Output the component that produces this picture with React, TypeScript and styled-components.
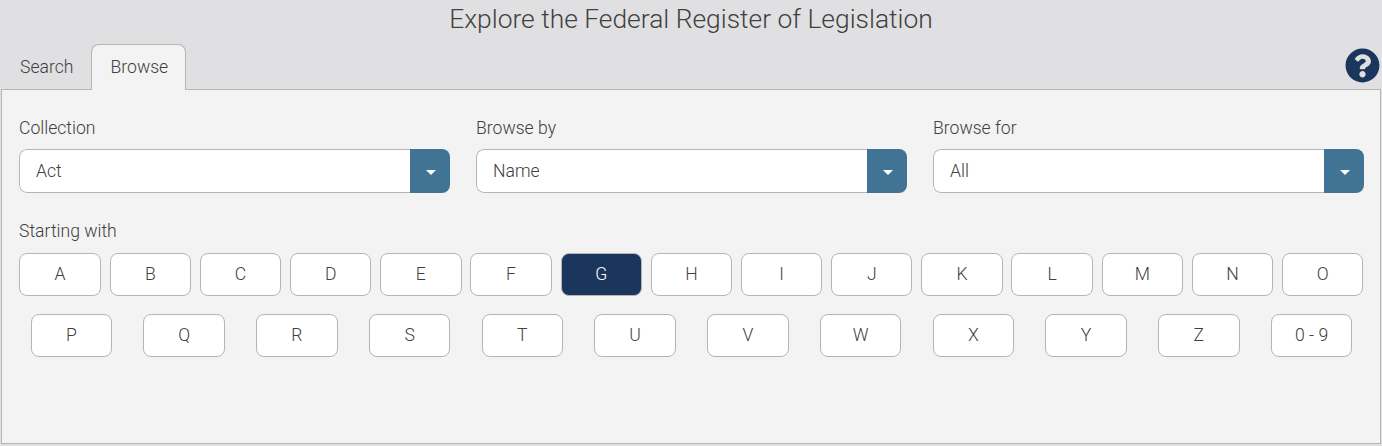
import { createGlobalStyle, styled } from 'styled-components'
import { FaQuestionCircle } from 'react-icons/fa'

const GlobalStyle = createGlobalStyle`
  html, body {
    margin: 0;
    padding: 0;
    background: #e0e0e2;
  }
  * {
    box-sizing: border-box;
  }
  body {
    font-family: Roboto, "Liberation Sans", sans-serif;
    font-weight: 300;
    color: #404040;
  }
`

const Page = styled.div`
  width: 1382px;
  height: 446px;
  display: flex;
  flex-direction: column;
  background: #e0e0e2;
`

const Title = styled.h1`
  margin: 0;
  height: 44px;
  padding-top: 3px;
  font-size: 26.4px;
  line-height: 32px;
  font-weight: 300;
  text-align: center;
  color: #404040;
`

const TabBar = styled.div`
  height: 46px;
  margin-bottom: -1px;
  display: flex;
  align-items: flex-end;
  position: relative;
  z-index: 1;
`

const Tab = styled.div<{ $active?: boolean }>`
  height: 46px;
  padding: 0 17px 0 ${(p) => (p.$active ? '18px' : '19px')};
  line-height: 45px;
  font-size: 17.6px;
  border: 1px solid ${(p) => (p.$active ? '#b5b5b5' : 'transparent')};
  border-bottom: 0;
  border-radius: 8px 8px 0 0;
  background: ${(p) => (p.$active ? '#f3f3f3' : 'transparent')};
`

const HelpButton = styled.div`
  margin: 0 2px 7px auto;
  height: 35px;
  font-size: 35px;
  line-height: 35px;
  color: #1b365d;
  svg {
    display: block;
  }
`

const Panel = styled.div`
  height: 355px;
  margin: 0 1px;
  padding: 26px 13px 0;
  background: #f3f3f3;
  border: 1px solid #b5b5b5;
`

const Filters = styled.div`
  display: grid;
  grid-template-columns: repeat(3, 431px);
  justify-content: space-between;
  padding: 0 3px 0 4px;
`

const Label = styled.label`
  display: block;
  font-size: 17.6px;
  line-height: 25px;
  margin-bottom: 8px;
`

const SelectBox = styled.div`
  height: 44px;
  display: flex;
  border-radius: 8px;
  overflow: hidden;
`

const SelectValue = styled.div`
  flex: 1;
  padding-left: 16px;
  font-size: 17.6px;
  line-height: 43px;
  background: #fff;
  border: 1px solid #b5b5b5;
  border-right: 0;
  border-radius: 8px 0 0 8px;
`

const SelectArrow = styled.div`
  width: 40px;
  padding: 2px 0 0 2px;
  display: flex;
  align-items: center;
  justify-content: center;
  background: #417394;
  &::after {
    content: '';
    border-style: solid;
    border-width: 5px 5px 0;
    border-color: #fff transparent transparent;
  }
`

const StartingLabel = styled(Label)`
  margin: 26px 0 9px;
  padding: 0 4px;
`

const LetterRow = styled.div`
  display: flex;
  justify-content: space-around;
  margin: 0 -1px 18px 0;
`

const LetterButton = styled.button<{ $active?: boolean }>`
  width: 81.4px;
  height: 43px;
  padding: 0 0 2px;
  font-family: inherit;
  font-weight: 300;
  font-size: 17.6px;
  border: 1px solid #b5b5b5;
  border-radius: 8px;
  background: ${(p) => (p.$active ? '#1b365d' : '#fff')};
  color: ${(p) => (p.$active ? '#fff' : '#404040')};
`

const filters = [
  { label: 'Collection', value: 'Act' },
  { label: 'Browse by', value: 'Name' },
  { label: 'Browse for', value: 'All' },
]

const rows = [
  ['A', 'B', 'C', 'D', 'E', 'F', 'G', 'H', 'I', 'J', 'K', 'L', 'M', 'N', 'O'],
  ['P', 'Q', 'R', 'S', 'T', 'U', 'V', 'W', 'X', 'Y', 'Z', '0 - 9'],
]

export default function App() {
  return (
    <Page>
      <GlobalStyle />
      <Title>Explore the Federal Register of Legislation</Title>
      <TabBar>
        <Tab>Search</Tab>
        <Tab $active>Browse</Tab>
        <HelpButton>
          <FaQuestionCircle />
        </HelpButton>
      </TabBar>
      <Panel>
        <Filters>
          {filters.map((f) => (
            <div key={f.label}>
              <Label>{f.label}</Label>
              <SelectBox>
                <SelectValue>{f.value}</SelectValue>
                <SelectArrow />
              </SelectBox>
            </div>
          ))}
        </Filters>
        <StartingLabel>Starting with</StartingLabel>
        {rows.map((row) => (
          <LetterRow key={row[0]}>
            {row.map((l) => (
              <LetterButton key={l} $active={l === 'G'}>
                {l}
              </LetterButton>
            ))}
          </LetterRow>
        ))}
      </Panel>
    </Page>
  )
}
